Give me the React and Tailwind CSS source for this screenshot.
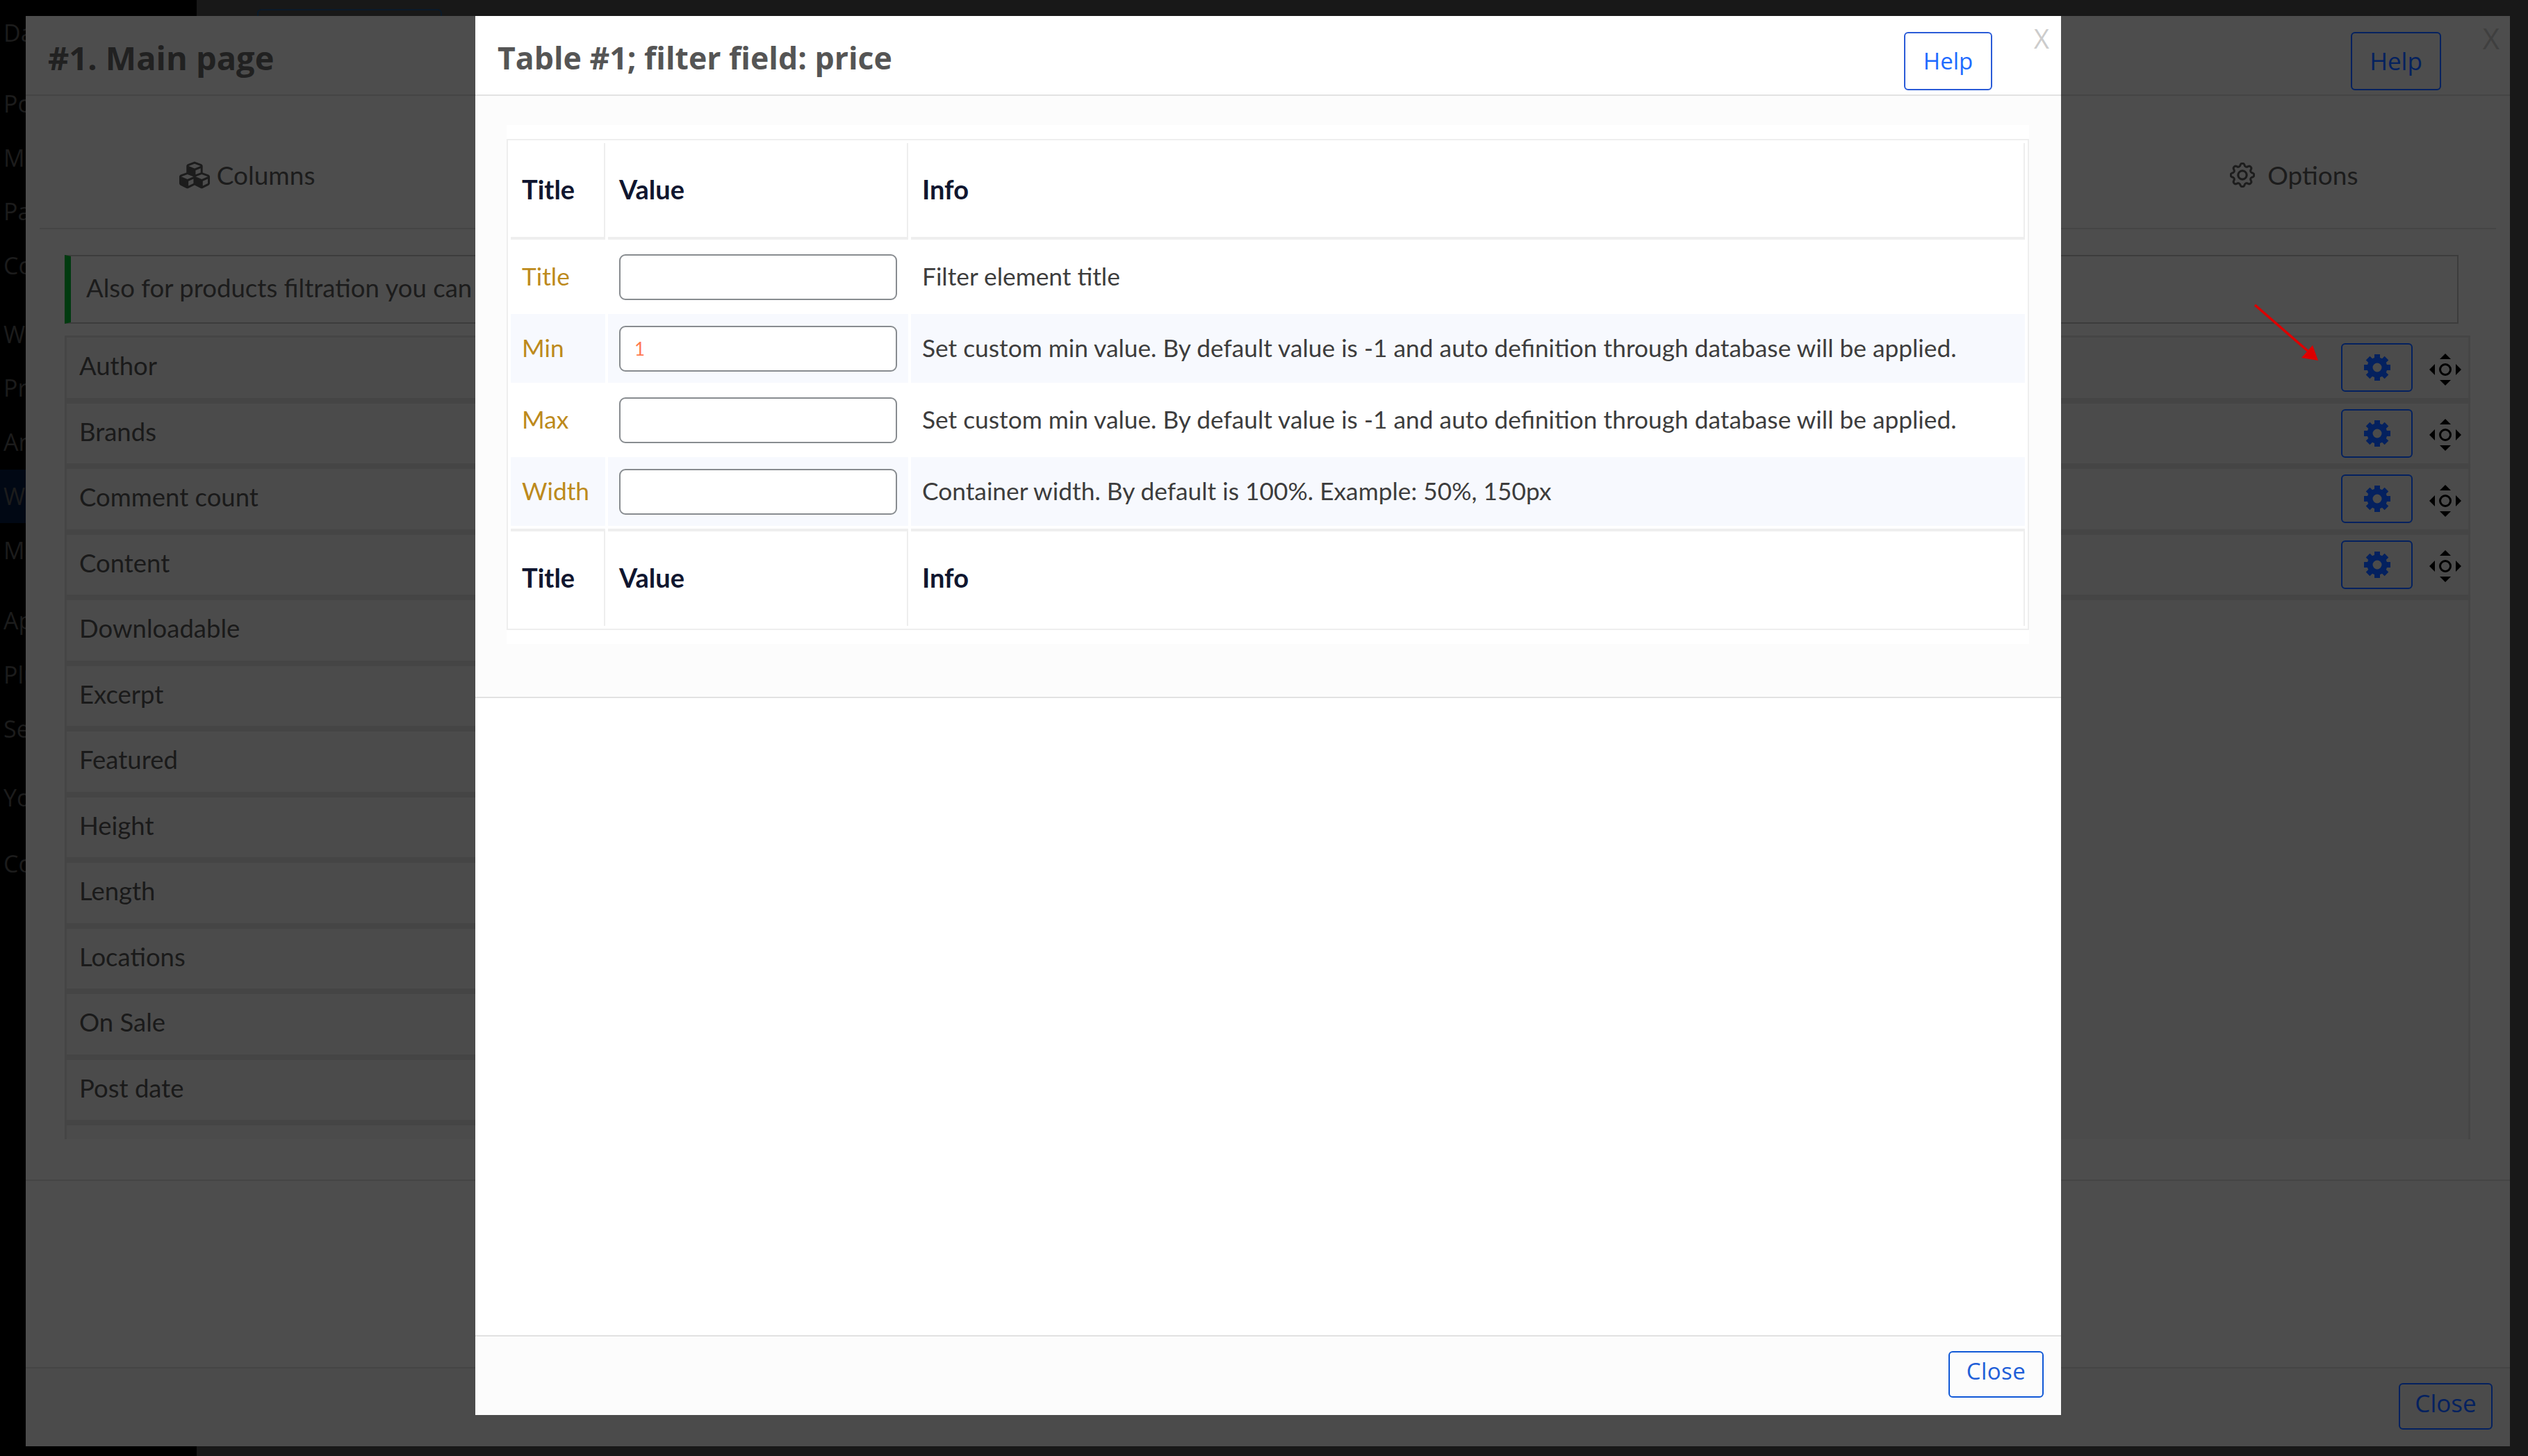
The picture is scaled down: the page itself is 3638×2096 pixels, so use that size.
import React from "react";
import { BsGear } from "react-icons/bs";
import { FaCubes } from "react-icons/fa";

const sideItems = [
  ["Dashboard", "mt-[9px]"],
  ["Posts", "mt-[24px]"],
  ["Media", ""],
  ["Pages", ""],
  ["Comments", ""],
  ["WooCommerce", "mt-[21px]"],
  ["Products", ""],
  ["Analytics", ""],
  ["WooBe", "bg-[#010814]"],
  ["Marketing", ""],
  ["Appearance", "mt-[24px]"],
  ["Plugins", ""],
  ["Settings", ""],
  ["Your Profile", "mt-[22px]"],
  ["Collapse", "mt-[17px]"],
];

const listRows = [
  "Author",
  "Brands",
  "Comment count",
  "Content",
  "Downloadable",
  "Excerpt",
  "Featured",
  "Height",
  "Length",
  "Locations",
  "On Sale",
  "Post date",
  "",
];

const fieldRows = [
  ["Title", "", "Filter element title", false],
  ["Min", "1", "Set custom min value. By default value is -1 and auto definition through database will be applied.", true],
  ["Max", "", "Set custom min value. By default value is -1 and auto definition through database will be applied.", false],
  ["Width", "", "Container width. By default is 100%. Example: 50%, 150px", true],
];

function SolidGear() {
  const angles = [0, 45, 90, 135, 180, 225, 270, 315];
  return (
    <svg width="38" height="38" viewBox="0 0 38 38" fill="#04215f">
      {angles.map((a) => (
        <rect key={a} x="15" y="0" width="8" height="9" transform={`rotate(${a} 19 19)`} />
      ))}
      <circle cx="19" cy="19" r="10.5" fill="none" stroke="#04215f" strokeWidth="8" />
    </svg>
  );
}

function MoveIcon() {
  return (
    <svg className="mt-[5px]" width="46" height="46" viewBox="0 0 46 46" fill="#000">
      <polygon points="23,0 31,8 15,8" />
      <polygon points="23,46 31,38 15,38" />
      <polygon points="0,23 8,15 8,31" />
      <polygon points="46,23 38,15 38,31" />
      <circle cx="23" cy="23" r="7.5" fill="none" stroke="#000" strokeWidth="3" />
    </svg>
  );
}

function HeadRow({ top }) {
  const cell = `px-4 pb-[3px] text-left align-middle text-[38px] font-bold text-[#10162f] border-r-2 border-r-[#eeeeee] ${top ? "border-t-4 border-t-[#eeeeee]" : "border-b-4 border-b-[#eeeeee]"}`;
  return (
    <tr className={top ? "h-[140px]" : "h-[139px]"}>
      <th className={cell}>Title</th>
      <th className={cell}>Value</th>
      <th className={cell}>Info</th>
    </tr>
  );
}

export default function App() {
  return (
    <div className="relative flex h-[2096px] w-[3638px] overflow-hidden bg-[#181818] font-['Open_Sans',sans-serif]">
      <aside className="flex h-full w-[283px] shrink-0 flex-col bg-black text-[34px] text-[#1c1c1c]">
        {sideItems.map(([label, extra]) => (
          <div key={label} className={`flex h-[77.7px] shrink-0 items-center whitespace-nowrap pl-[5px] ${extra}`}>
            {label}
          </div>
        ))}
      </aside>
      <main className="flex-1 pl-[87px] pt-[13px]">
        <div className="h-[40px] w-[266px] rounded-md border-2 border-[#0a1a2a]" />
      </main>

      {/* Background dialog */}
      <section className="absolute left-[37px] top-[23px] flex h-[2059px] w-[3575px] flex-col bg-[#4d4d4d]">
        <header className="relative flex h-[115px] shrink-0 border-b-2 border-[#454545] pl-[32px] pr-[99px]">
          <h2 className="mt-[28px] flex-1 text-[47px] font-bold leading-[64px] text-[#212121]">#1. Main page</h2>
          <button className="mt-[23px] h-[84px] w-[130px] rounded-md border-2 border-[#04215f] text-[35px] text-[#04215f]">Help</button>
          <span className="absolute right-[15px] top-[0px] text-[42px] text-[#3f3f3f]">X</span>
        </header>
        <nav className="mx-[20px] grid h-[192px] shrink-0 grid-cols-6 border-b-2 border-[#454545] pt-[38px] font-['Lato',sans-serif] text-[37px] text-[#1c1c1c]">
          <div className="flex items-center justify-center gap-[10px] pl-[8px]">
            <FaCubes size={44} />
            <span>Columns</span>
          </div>
          <div />
          <div />
          <div />
          <div />
          <div className="flex items-center justify-center gap-[18px] pl-[8px]">
            <BsGear size={36} stroke="currentColor" strokeWidth={0.35} />
            <span>Options</span>
          </div>
        </nav>
        <div className="ml-[56px] mr-[74px] mt-[37px] flex h-[99px] shrink-0 items-center border-2 border-l-[9px] border-[#3c3c3c] border-l-[#003b10] pb-[4px] pl-[22px] font-['Lato',sans-serif] text-[36.6px] text-[#1c1c1c]">
          Also for products filtration you can
        </div>
        <div className="ml-[56px] mr-[57px] mt-[17px] flex h-[1157px] shrink-0 flex-col overflow-hidden border-x-[3px] border-t-[3px] border-[#454545] bg-[#4b4b4b] font-['Lato',sans-serif] text-[36.5px] text-[#1a1a1a]">
          {listRows.map((label, i) => (
            <div
              key={i}
              className={`flex h-[94.5px] shrink-0 items-center justify-between border-b-[8px] border-[#454545] pl-[18px] ${i < 4 ? "pr-[10px]" : "w-[1500px]"}`}
            >
              <span className="mb-[5px]">{label}</span>
              {i < 4 && (
                <div className="flex items-center gap-[24px]">
                  <button className="flex h-[70px] w-[103px] items-center justify-center rounded-md border-2 border-[#04215f]">
                    <SolidGear />
                  </button>
                  <MoveIcon />
                </div>
              )}
            </div>
          ))}
        </div>
        <div className="mt-[58px] flex-1 border-t-2 border-[#454545]" />
        <footer className="flex h-[114px] shrink-0 items-center justify-end border-t-2 border-[#454545] bg-[#4b4b4b] pb-[3px] pr-[25px]">
          <button className="h-[67px] w-[135px] rounded-md border-2 border-[#04215f] pb-[9px] text-[35px] text-[#04215f]">Close</button>
        </footer>
      </section>

      {/* Red arrow annotation */}
      <svg className="absolute left-[3240px] top-[435px]" width="100" height="90" viewBox="0 0 100 90">
        <line x1="5" y1="4" x2="82" y2="71" stroke="#dd0000" strokeWidth="3.5" />
        <polygon points="96,84 72,80 88,62" fill="#dd0000" />
      </svg>

      {/* Foreground dialog */}
      <section className="absolute left-[684px] top-[23px] flex h-[2014px] w-[2282px] flex-col bg-white">
        <header className="relative flex h-[115px] shrink-0 border-b-2 border-[#e2e2e2] pl-[32px] pr-[99px]">
          <h2 className="mt-[28px] flex-1 text-[44.6px] font-bold leading-[64px] text-[#555555]">Table #1; filter field: price</h2>
          <button className="mt-[23px] h-[84px] w-[127px] rounded-md border-2 border-[#2a5bd7] text-[33px] text-[#1e6bff]">Help</button>
          <span className="absolute right-[17px] top-[4px] text-[38px] text-[#cccccc]">X</span>
        </header>
        <div className="h-[867px] shrink-0 border-b-2 border-[#e2e2e2] bg-[#fcfcfc] pl-[45px] pr-[46px] pt-[42px]">
          <div className="bg-white pb-[20px] pt-[20px] font-['Lato',sans-serif] text-[35.3px]">
            <table className="w-full table-fixed border-separate border-spacing-[4px] border-2 border-[#eeeeee]">
              <colgroup>
                <col className="w-[136px]" />
                <col className="w-[432px]" />
                <col />
              </colgroup>
              <thead>
                <HeadRow />
              </thead>
              <tbody>
                {fieldRows.map(([title, value, info, shaded]) => {
                  const bg = shaded ? "bg-[#f7f9fe]" : "";
                  return (
                    <tr key={title} className="h-[99px]">
                      <td className={`px-4 align-middle text-[#bd8a1c] ${bg}`}>{title}</td>
                      <td className={`px-4 align-middle ${bg}`}>
                        <input
                          readOnly
                          value={value}
                          className="block h-[66px] w-[400px] rounded-[9px] border-2 border-[#888c90] bg-white px-[20px] text-[26px] text-[#ff7a50]"
                        />
                      </td>
                      <td className={`px-4 align-middle text-[#3d3d3d] ${bg}`}>{info}</td>
                    </tr>
                  );
                })}
              </tbody>
              <tfoot>
                <HeadRow top />
              </tfoot>
            </table>
          </div>
        </div>
        <div className="flex-1" />
        <footer className="flex h-[115px] shrink-0 items-center justify-end border-t-2 border-[#e2e2e2] bg-[#fcfcfc] pr-[25px]">
          <button className="mt-[-4px] h-[67px] w-[137px] rounded-md border-2 border-[#1058d6] pb-[9px] text-[33px] tracking-[0.5px] text-[#1f5fd8]">Close</button>
        </footer>
      </section>
    </div>
  );
}
